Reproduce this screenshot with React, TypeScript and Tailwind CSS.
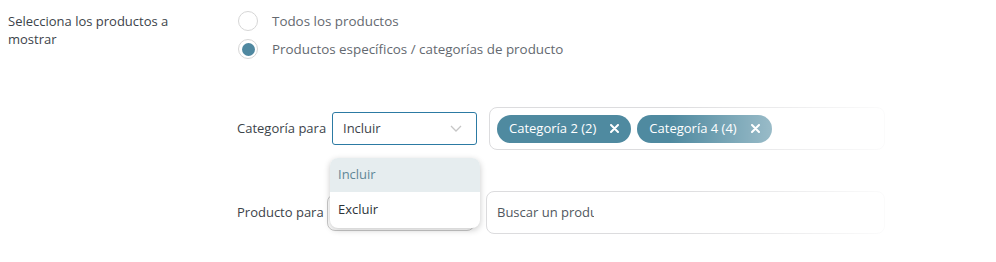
import React from "react";

const font = { fontFamily: '"Open Sans", "Noto Sans", Arial, sans-serif' };

function Radio({ checked, label }: { checked?: boolean; label: string }) {
  return (
    <div className="flex items-center h-[20px] gap-[14px]">
      <span className="w-[20px] h-[20px] rounded-full border border-[#d6d6d6] bg-white flex items-center justify-center shrink-0">
        {checked && <span className="w-[13px] h-[13px] rounded-full bg-[#4f88a0]" />}
      </span>
      <span className="text-[13.4px] text-[#646970] leading-[20px]">{label}</span>
    </div>
  );
}

function Tag({ label }: { label: string }) {
  return (
    <div className="h-[28px] rounded-[14px] bg-[#4f8aa0] text-white flex items-center pl-[12px] pr-[12px] text-[13px] leading-none">
      <span>{label}</span>
      <svg className="ml-[14px]" width="9" height="9" viewBox="0 0 9 9">
        <path d="M1 1L8 8M8 1L1 8" stroke="white" strokeWidth="2" strokeLinecap="round" />
      </svg>
    </div>
  );
}

function Chevron() {
  return (
    <svg width="12" height="7" viewBox="0 0 12 7">
      <path d="M1 1l5 5 5-5" stroke="#c6c6c6" strokeWidth="1.3" fill="none" />
    </svg>
  );
}

export default function App() {
  return (
    <div className="relative w-[996px] h-[262px] bg-white overflow-hidden" style={font}>
      <div className="flex pl-[8px] pt-[11px]">
        <div className="w-[230px] text-[13px] leading-[18px] text-[#3c434a] pt-[1px]">
          Selecciona los productos a
          <br />
          mostrar
        </div>
        <div className="flex flex-col">
          <div className="flex flex-col gap-[8px]">
            <Radio label="Todos los productos" />
            <Radio checked label="Productos específicos / categorías de producto" />
          </div>

          <div className="relative flex items-center mt-[48px] -ml-[1px]">
            <span className="text-[13px] text-[#3c434a] w-[95px]">Categoría para</span>
            <div className="w-[145px] h-[33px] border border-[#2c7aa3] rounded-[3px] flex items-center justify-between pl-[10px] pr-[14px] text-[13px] text-[#3c434a]">
              <span>Incluir</span>
              <Chevron />
            </div>
            <div className="ml-[12px] w-[396px] h-[43px] border border-[#dcdcde] rounded-[8px] flex items-center gap-[6px] pl-[7px]">
              <Tag label="Categoría 2 (2)" />
              <Tag label="Categoría 4 (4)" />
            </div>

            <div className="absolute left-[93px] top-[51px] w-[150px] z-10 bg-white rounded-[8px] shadow-[0_2px_6px_rgba(0,0,0,0.22)] overflow-hidden text-[13px]">
              <div className="h-[34px] bg-[#e6edef] text-[#5f8797] flex items-center pl-[8px]">Incluir</div>
              <div className="h-[36px] text-[#2c3338] flex items-center pl-[8px]">Excluir</div>
            </div>
          </div>

          <div className="flex items-center mt-[41px] -ml-[1px]">
            <span className="text-[13px] text-[#3c434a] w-[90px]">Producto para</span>
            <div className="w-[148px] h-[37px] border border-[#c9c9c9] rounded-[8px] bg-white" />
            <div className="ml-[11px] w-[399px] h-[43px] border border-[#dcdcde] rounded-[8px] flex items-center pl-[10px]">
              <div className="w-[97px] overflow-hidden whitespace-nowrap text-[13px] text-[#50575e]">Buscar un producto</div>
            </div>
          </div>
        </div>
      </div>
      <div className="absolute top-[100px] left-[670px] w-[230px] h-[140px] bg-gradient-to-r from-white/0 to-white/95 pointer-events-none" />
    </div>
  );
}
